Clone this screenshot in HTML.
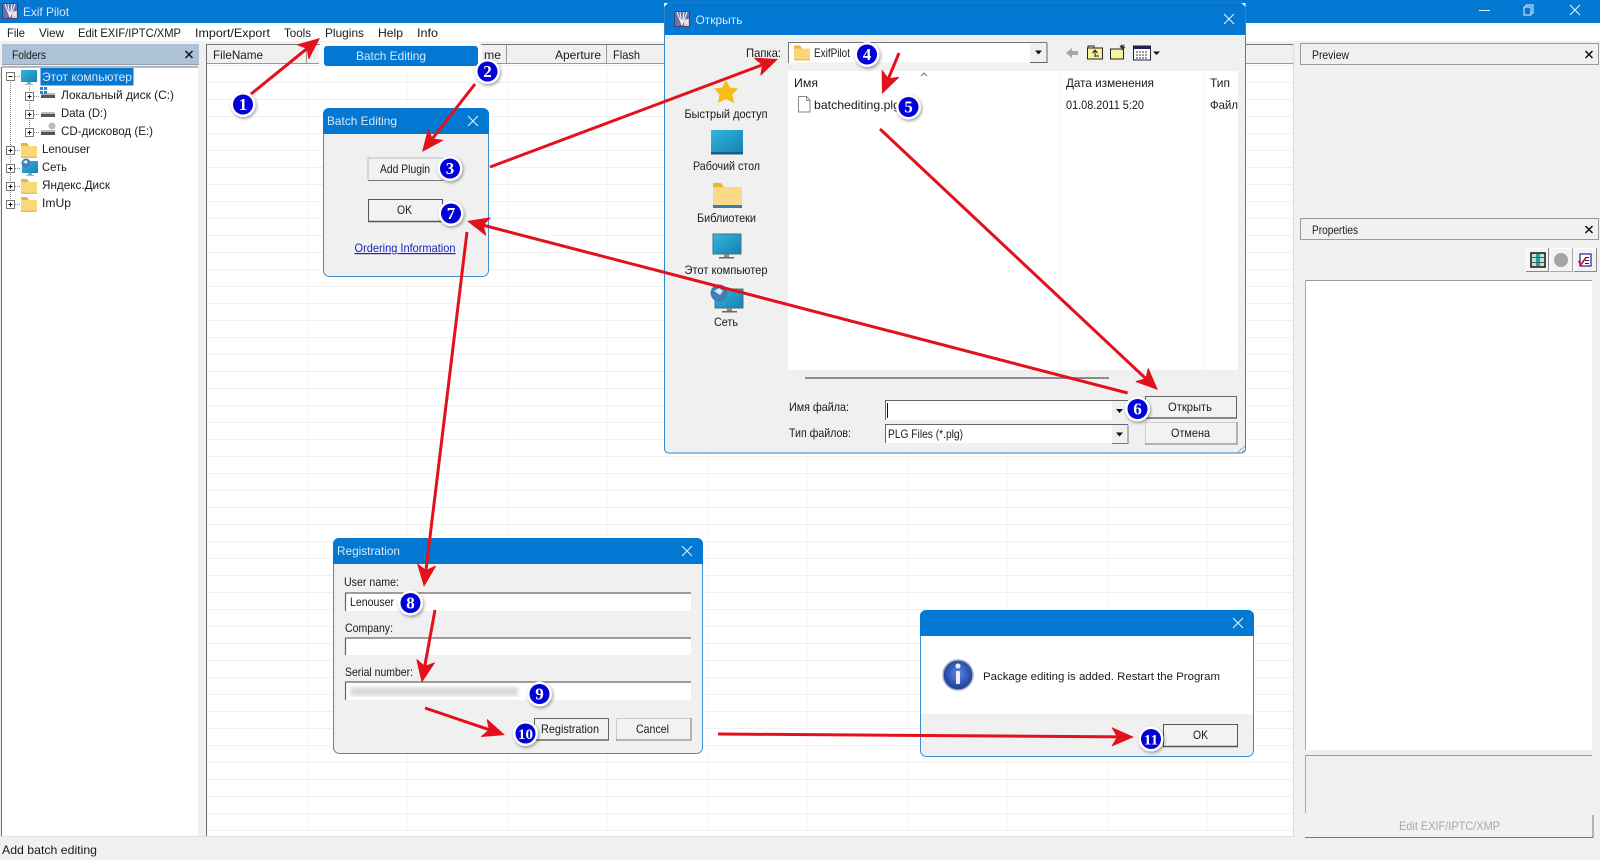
<!DOCTYPE html>
<html><head><meta charset="utf-8"><title>Exif Pilot</title>
<style>
html,body{margin:0;padding:0;background:#f0f0f0;width:1600px;height:860px;overflow:hidden}
svg{display:block;filter:blur(.35px)}
text{font-family:"Liberation Sans","Noto Sans CJK SC",sans-serif;font-size:12px;fill:#1a1a1a}
.w{fill:#d9e9f8}
.n{font-family:"Liberation Serif",serif;font-size:17px;font-weight:bold;fill:#fff;text-anchor:middle}
.a{stroke:#e2111b;stroke-width:3;fill:none;marker-end:url(#h)}
</style></head><body>
<svg width="1600" height="860" viewBox="0 0 1600 860" xmlns="http://www.w3.org/2000/svg">
<defs>
<marker id="h" markerUnits="userSpaceOnUse" markerWidth="30" markerHeight="26" viewBox="0 -13 30 26" refX="10" refY="0" orient="auto"><path d="M22 0L-1 -10L5 0L-1 10Z" fill="#e2111b"/></marker>
<pattern id="g" patternUnits="userSpaceOnUse" x="208" y="66" width="100" height="17"><rect width="100" height="17" fill="#fff"/><rect y="16" width="100" height="1" fill="#f0f0f0"/><rect x="99" width="1" height="17" fill="#f7f7f7"/></pattern>
<filter id="s" x="-40%" y="-40%" width="180%" height="180%"><feDropShadow dx="1" dy="1.5" stdDeviation="1.500" flood-color="#000" flood-opacity=".4"/></filter>
<filter id="b"><feGaussianBlur stdDeviation="2"/></filter>
<radialGradient id="ig" cx=".5" cy=".45" r=".55"><stop offset="0" stop-color="#5f8ce0"/><stop offset=".7" stop-color="#2a52b0"/><stop offset="1" stop-color="#1c3a8e"/></radialGradient>
<linearGradient id="dg" x1="0" y1="0" x2="1" y2="1"><stop offset="0" stop-color="#2fb8dc"/><stop offset="1" stop-color="#1a7fb4"/></linearGradient>
<g id="fo"><path d="M0 2h6l2 2h8v12H0z" fill="#fbd77c"/><path d="M0 1h6l2 3H0z" fill="#eeb62c"/><rect y="14.500" width="16" height="1.500" fill="#e9c060"/></g>
<g id="bx"><rect x="-4" y="-4" width="8" height="8" fill="#fff" stroke="#777"/><path d="M-2 0h4" stroke="#111"/></g>
<g id="bp"><use href="#bx"/><path d="M0 -2v4" stroke="#111"/></g>
<g id="dk"><rect x="0" y="3" width="14" height="4" fill="#555"/><rect x="0" y="2" width="14" height="2" fill="#bbb"/></g>
<g id="app"><rect width="16" height="16" fill="#3a4478"/><rect x="1" y="1" width="14" height="14" fill="#6a70a8"/><path d="M3 1l5 13M6 1l2 13M13 1L8 14M10 1L8 14" stroke="#eeeef8" stroke-width="1.100"/><path d="M10 8h5v7h-5z" fill="#e6c4c8"/><path d="M11 10h3M11 12h3" stroke="#fff"/></g>
<g id="pc"><rect x="0" y="0" width="16" height="12" fill="url(#dg)"/><rect x="6" y="12" width="4" height="2" fill="#8aa"/><rect x="4" y="14" width="8" height="1" fill="#9bb"/></g>
<g id="x"><path d="M-5 -5L5 5M5 -5L-5 5" stroke="#e6f0fb" stroke-width="1.100" fill="none"/></g>
<g id="xk"><path d="M-3.500 -3.500L3.500 3.500M3.500 -3.500L-3.500 3.500" stroke="#111" stroke-width="1.500"/></g>
<g id="dd"><path d="M-3.500 -2h7L0 2z" fill="#111"/></g>
</defs>

<rect width="1600" height="860" fill="#f0f0f0"/>
<!-- title bar -->
<rect width="1600" height="23" fill="#0278d2"/>
<use href="#app" x="2" y="3"/>
<text x="23" y="16" class="w" textLength="46" lengthAdjust="spacingAndGlyphs">Exif Pilot</text>
<path d="M1479 10.500h11" stroke="#e6f0fb"/>
<path d="M1524 7h7v8h-7zM1526 7V5h7v8h-2" stroke="#e6f0fb" fill="none"/>
<use href="#x" x="1575" y="10"/>
<!-- menu -->
<rect y="23" width="1600" height="18" fill="#fff"/>
<text x="7" y="37" textLength="18" lengthAdjust="spacingAndGlyphs">File</text>
<text x="39" y="37" textLength="25" lengthAdjust="spacingAndGlyphs">View</text>
<text x="78" y="37" textLength="103" lengthAdjust="spacingAndGlyphs">Edit EXIF/IPTC/XMP</text>
<text x="195" y="37" textLength="75" lengthAdjust="spacingAndGlyphs">Import/Export</text>
<text x="284" y="37" textLength="27" lengthAdjust="spacingAndGlyphs">Tools</text>
<text x="325" y="37" textLength="39" lengthAdjust="spacingAndGlyphs">Plugins</text>
<text x="378" y="37" textLength="25" lengthAdjust="spacingAndGlyphs">Help</text>
<text x="417" y="37" textLength="21" lengthAdjust="spacingAndGlyphs">Info</text>

<!-- folders panel -->
<rect x="2" y="44" width="197" height="21" fill="#adc1d7"/>
<rect x="2" y="64" width="197" height="1" fill="#8f9fb0"/>
<text x="12" y="59" textLength="34" lengthAdjust="spacingAndGlyphs">Folders</text>
<use href="#xk" x="189" y="54.500"/>
<rect x="2" y="67" width="196" height="769" fill="#fff"/>
<rect x="1" y="67" width="1" height="769" fill="#6d6d6d"/>
<rect x="2" y="66.500" width="196" height="1" fill="#777"/>
<rect x="0" y="836" width="1296" height="1" fill="#e2e2e2"/>
<!-- tree -->
<path d="M10.500 82V204M15 76.500h5M15 150.500h5M15 168.500h5M15 186.500h5M15 204.500h5M29.500 86V132M34 96.500h6M34 114.500h6M34 132.500h6" stroke="#888" stroke-dasharray="1 1" fill="none"/>
<use href="#bx" x="10.500" y="76.500"/>
<use href="#pc" x="21" y="70"/>
<rect x="40.500" y="68" width="93" height="17.500" fill="#0678d0"/>
<text x="42" y="81" class="w" textLength="90" lengthAdjust="spacingAndGlyphs">Этот компьютер</text>
<use href="#bp" x="29.500" y="96.500"/><use href="#dk" x="41" y="91"/>
<rect x="40" y="87" width="3" height="3" fill="#2f7fd0"/><rect x="44" y="87" width="3" height="3" fill="#2f7fd0"/><rect x="40" y="91" width="3" height="3" fill="#2f7fd0"/><rect x="44" y="91" width="3" height="3" fill="#2f7fd0"/>
<text x="61" y="99" textLength="113" lengthAdjust="spacingAndGlyphs">Локальный диск (C:)</text>
<use href="#bp" x="29.500" y="114.500"/><use href="#dk" x="41" y="110"/>
<text x="61" y="117" textLength="46" lengthAdjust="spacingAndGlyphs">Data (D:)</text>
<use href="#bp" x="29.500" y="132.500"/><use href="#dk" x="41" y="128"/><circle cx="52" cy="126" r="3.500" fill="#bbb"/>
<text x="61" y="135" textLength="92" lengthAdjust="spacingAndGlyphs">CD-дисковод (E:)</text>
<use href="#bp" x="10.500" y="150.500"/><use href="#fo" x="21" y="142"/>
<text x="42" y="153" textLength="48" lengthAdjust="spacingAndGlyphs">Lenouser</text>
<use href="#bp" x="10.500" y="168.500"/><use href="#pc" x="22" y="161"/><circle cx="26" cy="163" r="4.500" fill="#3d7fb8"/><path d="M23 162l3 -2l2 2l-2 2z" fill="#d8e8f4"/>
<text x="42" y="171" textLength="25" lengthAdjust="spacingAndGlyphs">Сеть</text>
<use href="#bp" x="10.500" y="186.500"/><use href="#fo" x="21" y="178"/>
<text x="42" y="189" textLength="68" lengthAdjust="spacingAndGlyphs">Яндекс.Диск</text>
<use href="#bp" x="10.500" y="204.500"/><use href="#fo" x="21" y="196"/>
<text x="42" y="207" textLength="29" lengthAdjust="spacingAndGlyphs">ImUp</text>

<!-- file list -->
<rect x="207" y="64" width="1087" height="772" fill="url(#g)"/>
<rect x="206" y="44" width="1" height="792" fill="#6d6d6d"/>
<rect x="1293" y="44" width="1" height="792" fill="#dcdcdc"/>
<rect x="207" y="44" width="1086" height="20" fill="#f0f0f0"/>
<rect x="206" y="44" width="1087" height="1" fill="#777"/>
<rect x="207" y="63" width="1086" height="1" fill="#999"/>
<rect x="306" y="45" width="1" height="18" fill="#999"/><rect x="406" y="45" width="1" height="18" fill="#999"/><rect x="506" y="45" width="1" height="18" fill="#999"/><rect x="606" y="45" width="1" height="18" fill="#999"/>
<text x="213" y="59" textLength="50" lengthAdjust="spacingAndGlyphs">FileName</text>
<text x="484" y="59" textLength="17" lengthAdjust="spacingAndGlyphs">me</text>
<text x="555" y="59" textLength="46" lengthAdjust="spacingAndGlyphs">Aperture</text>
<text x="613" y="59" textLength="27" lengthAdjust="spacingAndGlyphs">Flash</text>

<!-- plugin dropdown -->
<rect x="319" y="42" width="163" height="27" rx="5" fill="#fbfbfb"/>
<rect x="324" y="46" width="154" height="20" rx="3" fill="#0278d2"/>
<text x="356" y="60" class="w" textLength="70" lengthAdjust="spacingAndGlyphs">Batch Editing</text>

<!-- right panels -->
<rect x="1300.500" y="43.500" width="298" height="21" fill="#f0f0f0" stroke="#9a9a9a"/>
<text x="1312" y="59" textLength="37" lengthAdjust="spacingAndGlyphs">Preview</text>
<use href="#xk" x="1589" y="54.500"/>
<rect x="1300.500" y="218.500" width="298" height="21" fill="#f0f0f0" stroke="#9a9a9a"/>
<text x="1312" y="234" textLength="46" lengthAdjust="spacingAndGlyphs">Properties</text>
<use href="#xk" x="1589" y="229.500"/>
<g>
<rect x="1526.500" y="248.500" width="22" height="23" fill="#f3f3f3"/><path d="M1526 271.500h22.500V248" stroke="#888" fill="none"/><path d="M1526.500 271V248.500H1548" stroke="#fff" fill="none"/>
<rect x="1531" y="253" width="14" height="14" fill="#bfe3e0" stroke="#111" stroke-width="1.500"/><rect x="1536" y="254" width="4" height="12" fill="#1ea4a4"/><path d="M1531 257.500h14M1531 262.500h14" stroke="#555"/>
<rect x="1550.500" y="248.500" width="22" height="23" fill="#f3f3f3"/><path d="M1550 271.500h22.500V248" stroke="#aaa" fill="none"/><path d="M1550.500 271V248.500H1572" stroke="#fff" fill="none"/>
<circle cx="1561" cy="260" r="7" fill="#a4a4a4"/>
<rect x="1574.500" y="248.500" width="22" height="23" fill="#f3f3f3"/><path d="M1574 271.500h22.500V248" stroke="#888" fill="none"/><path d="M1574.500 271V248.500H1596" stroke="#fff" fill="none"/>
<rect x="1580" y="254" width="11" height="12" fill="#fff" stroke="#2a2080" stroke-width="1.200"/><path d="M1585 257.500h4M1585 260.500h4M1585 263.500h4" stroke="#2a2080"/><path d="M1578.500 261l2.500 3.500l5 -7" stroke="#c8102e" stroke-width="1.600" fill="none"/>
</g>
<rect x="1305" y="280" width="287" height="470" fill="#fff"/>
<rect x="1305" y="280" width="287" height="1" fill="#999"/><rect x="1305" y="280" width="1" height="470" fill="#aaa"/>
<rect x="1305" y="755" width="287" height="1" fill="#999"/><rect x="1305" y="755" width="1" height="58" fill="#aaa"/>
<rect x="1305" y="815" width="287" height="22" fill="#f1f1f1"/>
<path d="M1305 837.500h288V815" stroke="#777" fill="none"/>
<text x="1399" y="830" style="fill:#a8a8a8" textLength="101" lengthAdjust="spacingAndGlyphs">Edit EXIF/IPTC/XMP</text>

<!-- status -->
<text x="2" y="854" textLength="95" lengthAdjust="spacingAndGlyphs">Add batch editing</text>

<!-- Batch Editing dialog -->
<rect x="323.500" y="108.500" width="165" height="168" rx="6" fill="#f0f0f0" stroke="#3b8fcf"/>
<path d="M323 134v-20a6 6 0 0 1 6 -6h154a6 6 0 0 1 6 6v20z" fill="#0278d2"/>
<text x="327" y="125" class="w" textLength="70" lengthAdjust="spacingAndGlyphs">Batch Editing</text>
<use href="#x" x="473" y="121"/>
<rect x="368.500" y="158.500" width="74" height="22" fill="#f2f2f2"/>
<path d="M368 180.500h75V158M368 180V158h75" stroke="#bbb" fill="none"/><path d="M368 180.500h75" stroke="#777"/>
<text x="380" y="173" textLength="50" lengthAdjust="spacingAndGlyphs">Add Plugin</text>
<rect x="368.500" y="199.500" width="74" height="22" fill="#f2f2f2" stroke="#555"/><path d="M368 221.500h75" stroke="#555" stroke-width="1.500"/>
<text x="397" y="214" textLength="15" lengthAdjust="spacingAndGlyphs">OK</text>
<text x="354.500" y="252" style="fill:#1e22c4;text-decoration:underline" textLength="101" lengthAdjust="spacingAndGlyphs">Ordering Information</text>

<!-- Open dialog -->
<rect x="664.500" y="3" width="581" height="450" rx="4" fill="#f0f0f0" stroke="#2f86c8"/>
<rect x="665" y="5" width="580" height="30" fill="#0278d2"/>
<rect x="664" y="3" width="581" height="3" fill="#0278d2"/>
<path d="M664 3h4l-4 4zM1245.500 3h-4l4 4z" fill="#eef4fa"/>
<use href="#app" x="674" y="11"/>
<text x="695.500" y="24" class="w" textLength="47" lengthAdjust="spacingAndGlyphs">Открыть</text>
<use href="#x" x="1229" y="19"/>
<text x="746" y="57" textLength="35" lengthAdjust="spacingAndGlyphs">Папка:</text>
<rect x="788.500" y="42.500" width="258" height="20" fill="#fff"/>
<path d="M788.500 63V42.500H1047" stroke="#777" fill="none"/>
<rect x="1030" y="43" width="16.500" height="19.500" fill="#f0f0f0"/><path d="M1030 62.500h17V43" stroke="#666" fill="none"/>
<use href="#dd" x="1038.500" y="52.500"/>
<use href="#fo" x="794" y="44.500"/>
<text x="814" y="57" textLength="36" lengthAdjust="spacingAndGlyphs">ExifPilot</text>
<!-- toolbar -->
<path d="M1066 53l6 -5v3h6v4h-6v3z" fill="#a8a8a8"/>
<rect x="1087.500" y="48" width="15" height="11" fill="#f6f29e" stroke="#222"/><path d="M1088 48v-2h6v2" stroke="#222" fill="none"/><path d="M1095 57v-6M1092.500 53l2.500 -3l2.500 3M1095 56h4" stroke="#222" fill="none"/>
<rect x="1110.500" y="49" width="13" height="10" fill="#f6f29e" stroke="#222"/><path d="M1122 44l1 2l2 -2l-1 3l2 1l-3 .5l-1 2.500l-.5 -3l-2 -1z" fill="#333"/>
<rect x="1133.500" y="46" width="17" height="14" fill="#fff" stroke="#223"/><rect x="1134" y="46" width="17" height="3" fill="#225"/><path d="M1136 52h12M1136 55h12M1136 58h12" stroke="#333" stroke-dasharray="2 1"/>
<path d="M1153 51.500h7L1156.500 55z" fill="#111"/>
<!-- places -->
<path d="M726 80l4 7.500l8 1l-5.500 6l1.500 8.500l-8 -4l-8 4l1.500 -8.500l-5.500 -6l8 -1z" fill="#f8bd14"/>
<text x="684.500" y="118" textLength="83" lengthAdjust="spacingAndGlyphs">Быстрый доступ</text>
<rect x="711" y="130" width="32" height="22" fill="url(#dg)"/><rect x="711" y="152" width="32" height="2.500" fill="#1c5c84"/>
<text x="693" y="170" textLength="67" lengthAdjust="spacingAndGlyphs">Рабочий стол</text>
<path d="M713 185h8l2 2h19v21h-29z" fill="#fcd987"/><path d="M713 183h8l3 4h-11z" fill="#edb52c"/><rect x="713" y="205" width="29" height="3" fill="#3a80a8"/>
<text x="697" y="222" textLength="59" lengthAdjust="spacingAndGlyphs">Библиотеки</text>
<rect x="713" y="234" width="28" height="20" fill="url(#dg)" stroke="#4b6f84"/><rect x="724" y="254" width="5" height="3" fill="#888"/><rect x="719" y="257" width="15" height="1.500" fill="#666"/>
<text x="684.500" y="274" textLength="83" lengthAdjust="spacingAndGlyphs">Этот компьютер</text>
<rect x="715" y="289" width="28" height="19" fill="url(#dg)" stroke="#4b6f84"/><rect x="727" y="308" width="5" height="3" fill="#888"/><rect x="722" y="311" width="15" height="1.500" fill="#666"/><circle cx="719" cy="293" r="8.500" fill="#3f7fb4"/><path d="M714 291l5 -3l4 3l-3 4z" fill="#d8e8f4"/>
<text x="714" y="326" textLength="24" lengthAdjust="spacingAndGlyphs">Сеть</text>
<!-- list -->
<rect x="788" y="71" width="450" height="299" fill="#fff"/>
<rect x="1060" y="71" width="1" height="299" fill="#f6f6f6"/><rect x="1203" y="71" width="1" height="299" fill="#f6f6f6"/>
<path d="M921 76l3 -3l3 3" stroke="#777" fill="none"/>
<text x="794" y="87" textLength="24" lengthAdjust="spacingAndGlyphs">Имя</text>
<text x="1066" y="87" textLength="88" lengthAdjust="spacingAndGlyphs">Дата изменения</text>
<text x="1210" y="87" textLength="20" lengthAdjust="spacingAndGlyphs">Тип</text>
<path d="M798.500 96.500h8l3.500 3.500v12h-11.500zM806.500 96.500v4h3.500" fill="#fff" stroke="#888"/>
<text x="814" y="109" textLength="86" lengthAdjust="spacingAndGlyphs">batchediting.plg</text>
<text x="1066" y="109" textLength="78" lengthAdjust="spacingAndGlyphs">01.08.2011 5:20</text>
<text x="1210" y="109" textLength="28" lengthAdjust="spacingAndGlyphs">Файл</text>
<rect x="805" y="377" width="304" height="2" fill="#8c8c8c"/>
<!-- form -->
<text x="789" y="411" textLength="60" lengthAdjust="spacingAndGlyphs">Имя файла:</text>
<rect x="885" y="400" width="243" height="20" fill="#fff"/><path d="M885.500 420V400.500H1128" stroke="#666" fill="none"/>
<path d="M887.500 403v15" stroke="#111"/>
<rect x="1112" y="401" width="16" height="19" fill="#f0f0f0"/><use href="#dd" x="1119.500" y="411"/>
<text x="789" y="437" textLength="62" lengthAdjust="spacingAndGlyphs">Тип файлов:</text>
<rect x="885" y="424" width="243" height="19" fill="#fff"/><path d="M885.500 443V424.500H1128" stroke="#666" fill="none"/>
<rect x="1112" y="425" width="16" height="18" fill="#f0f0f0"/><path d="M1112 443.500h16V425" stroke="#777" fill="none"/><use href="#dd" x="1119.500" y="434.500"/>
<text x="888" y="438" textLength="75" lengthAdjust="spacingAndGlyphs">PLG Files (*.plg)</text>
<rect x="1145.500" y="396.500" width="91" height="21.500" fill="#f2f2f2" stroke="#666"/><path d="M1145 418h92" stroke="#666" stroke-width="1.500"/>
<text x="1168" y="411" textLength="44" lengthAdjust="spacingAndGlyphs">Открыть</text>
<rect x="1145.500" y="422.500" width="91" height="21.500" fill="#f2f2f2"/><path d="M1145 422.500h92M1145.500 422v22" stroke="#ccc"/><path d="M1145 444h92V422" stroke="#777" fill="none"/>
<text x="1171" y="437" textLength="39" lengthAdjust="spacingAndGlyphs">Отмена</text>
<path d="M1245 446l-8 7M1245 450l-4 3" stroke="#9ab" fill="none"/>

<!-- Registration -->
<rect x="333.500" y="538.500" width="369" height="215" rx="6" fill="#f0f0f0" stroke="#3b8fcf"/>
<path d="M333 564v-20a6 6 0 0 1 6 -6h358a6 6 0 0 1 6 6v20z" fill="#0278d2"/>
<text x="337" y="555" class="w" textLength="63" lengthAdjust="spacingAndGlyphs">Registration</text>
<use href="#x" x="687" y="551"/>
<text x="344" y="586" textLength="55" lengthAdjust="spacingAndGlyphs">User name:</text>
<rect x="345" y="593" width="346" height="18" fill="#fff"/><path d="M345.500 611V593H691" stroke="#666" stroke-width="1.200" fill="none"/>
<text x="350" y="606" textLength="44" lengthAdjust="spacingAndGlyphs">Lenouser</text>
<text x="345" y="632" textLength="48" lengthAdjust="spacingAndGlyphs">Company:</text>
<rect x="345" y="638" width="346" height="17" fill="#fff"/><path d="M345.500 655V638H691" stroke="#666" stroke-width="1.200" fill="none"/>
<text x="345" y="676" textLength="68" lengthAdjust="spacingAndGlyphs">Serial number:</text>
<rect x="345" y="682" width="346" height="18" fill="#fff"/><path d="M345.500 700V682H691" stroke="#666" stroke-width="1.200" fill="none"/>
<rect x="350" y="687" width="168" height="9" fill="#d8d8d8" filter="url(#b)"/>
<rect x="534.500" y="718.500" width="74" height="21.500" fill="#f2f2f2" stroke="#666"/><path d="M534 740h75" stroke="#666" stroke-width="1.500"/>
<text x="541" y="733" textLength="58" lengthAdjust="spacingAndGlyphs">Registration</text>
<rect x="616.500" y="718.500" width="74" height="21.500" fill="#f2f2f2"/><path d="M616 718.500h75M616.500 718v22" stroke="#ccc"/><path d="M616 740h75V718" stroke="#777" fill="none"/>
<text x="636" y="733" textLength="33" lengthAdjust="spacingAndGlyphs">Cancel</text>

<!-- Alert -->
<rect x="920.500" y="610.500" width="333" height="146" rx="6" fill="#f0f0f0" stroke="#3b8fcf"/>
<path d="M920 636v-20a6 6 0 0 1 6 -6h322a6 6 0 0 1 6 6v20z" fill="#0278d2"/>
<rect x="921" y="636" width="332" height="78" fill="#fff"/>
<use href="#x" x="1238" y="623"/>
<circle cx="958" cy="675" r="15" fill="url(#ig)" stroke="#a4aec8" stroke-width="1.500"/>
<circle cx="958" cy="666" r="2.500" fill="#eef"/><rect x="956" y="671" width="4" height="13" rx="1" fill="#eef"/>
<text x="983" y="680" style="font-size:11px" textLength="237" lengthAdjust="spacingAndGlyphs">Package editing is added. Restart the Program</text>
<rect x="1163.500" y="724.500" width="74" height="22" fill="#f2f2f2" stroke="#555"/><path d="M1163 746.500h75" stroke="#555" stroke-width="1.500"/>
<text x="1193" y="739" textLength="15" lengthAdjust="spacingAndGlyphs">OK</text>

<!-- arrows -->
<path class="a" d="M251 94L310.700 45.600"/>
<path class="a" d="M475 84L429.400 142.500"/>
<path class="a" d="M490 167L766.800 63.200"/>
<path class="a" d="M899 53L886.600 82.900"/>
<path class="a" d="M880 129L1149.200 381.800"/>
<path class="a" d="M1127.600 393L478.600 224"/>
<path class="a" d="M467 232L425.400 575"/>
<path class="a" d="M435 610L423.900 670.900"/>
<path class="a" d="M425 708L493.600 731.200"/>
<path class="a" d="M718 734L1122 736.900"/>

<!-- badges -->
<g filter="url(#s)">
<circle cx="243" cy="104.500" r="12.500" fill="#fff"/><circle cx="243" cy="104.500" r="10" fill="#0000d8"/>
<circle cx="487.500" cy="71.500" r="12.500" fill="#fff"/><circle cx="487.500" cy="71.500" r="10" fill="#0000d8"/>
<circle cx="450" cy="168.500" r="12.500" fill="#fff"/><circle cx="450" cy="168.500" r="10" fill="#0000d8"/>
<circle cx="867" cy="54.500" r="12.500" fill="#fff"/><circle cx="867" cy="54.500" r="10" fill="#0000d8"/>
<circle cx="908.500" cy="107" r="12.500" fill="#fff"/><circle cx="908.500" cy="107" r="10" fill="#0000d8"/>
<circle cx="1137.500" cy="409" r="12.500" fill="#fff"/><circle cx="1137.500" cy="409" r="10" fill="#0000d8"/>
<circle cx="451" cy="213.500" r="12.500" fill="#fff"/><circle cx="451" cy="213.500" r="10" fill="#0000d8"/>
<circle cx="410.500" cy="603" r="12.500" fill="#fff"/><circle cx="410.500" cy="603" r="10" fill="#0000d8"/>
<circle cx="539.500" cy="694" r="12.500" fill="#fff"/><circle cx="539.500" cy="694" r="10" fill="#0000d8"/>
<circle cx="525.500" cy="733.500" r="12.500" fill="#fff"/><circle cx="525.500" cy="733.500" r="10" fill="#0000d8"/>
<circle cx="1151" cy="739" r="12.500" fill="#fff"/><circle cx="1151" cy="739" r="10" fill="#0000d8"/>
</g>
<text class="n" x="243" y="110">1</text>
<text class="n" x="487.500" y="77">2</text>
<text class="n" x="450" y="174">3</text>
<text class="n" x="867" y="60">4</text>
<text class="n" x="908.500" y="112.500">5</text>
<text class="n" x="1137.500" y="414.500">6</text>
<text class="n" x="451" y="219">7</text>
<text class="n" x="410.500" y="608.500">8</text>
<text class="n" x="539.500" y="699.500">9</text>
<text class="n" x="525.500" y="739" style="font-size:15px">10</text>
<text class="n" x="1151" y="744.500" style="font-size:15px">11</text>
</svg>
</body></html>
